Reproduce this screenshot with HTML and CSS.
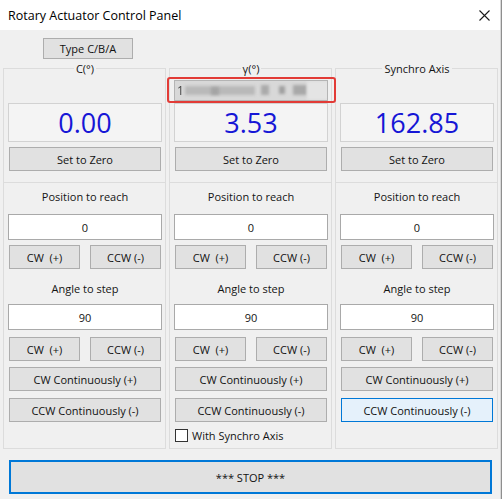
FILE: index.html
```html
<!DOCTYPE html>
<html>
<head>
<meta charset="utf-8">
<link rel="stylesheet" href="styles.css">
</head>
<body>
<div class="window">
  <div class="titlebar">
    <span class="title">Rotary Actuator Control Panel</span>
    <svg class="close" width="11" height="11" viewBox="0 0 11 11"><path d="M0.5 0.5 L10.5 10.5 M10.5 0.5 L0.5 10.5" stroke="#1a1a1a" stroke-width="1.1" fill="none"/></svg>
  </div>
  <div class="client">
    <div class="type-row"><div class="btn type-btn">Type C/B/A</div></div>
    <div class="columns">
      <div class="col">
        <div class="col-top">
          <div class="legend">C(°)</div>
          <div class="textrow"></div>
          <div class="display">0.00</div>
          <div class="btn zero">Set to Zero</div>
        </div>
        <div class="col-bottom">
          <div class="lbl first">Position to reach</div>
          <div class="input in1">0</div>
          <div class="pair p1"><div class="btn half">CW  (+)</div><div class="btn half">CCW (-)</div></div>
          <div class="lbl second">Angle to step</div>
          <div class="input in2">90</div>
          <div class="pair p2"><div class="btn half">CW  (+)</div><div class="btn half">CCW (-)</div></div>
          <div class="btn wide cwc">CW Continuously (+)</div>
          <div class="btn wide ccwc">CCW Continuously (-)</div>
        </div>
      </div>
      <div class="col mid">
        <div class="col-top">
          <div class="legend">γ(°)</div>
          <div class="textrow blurbox">
            <span class="cursor">1</span>
            <span class="blur b1"></span><span class="blur b2"></span><span class="blur b3"></span><span class="blur b4"></span><span class="blur b5"></span><span class="blur b6"></span>
          </div>
          <div class="display">3.53</div>
          <div class="btn zero">Set to Zero</div>
          <div class="highlight"></div>
        </div>
        <div class="col-bottom">
          <div class="lbl first">Position to reach</div>
          <div class="input in1">0</div>
          <div class="pair p1"><div class="btn half">CW  (+)</div><div class="btn half">CCW (-)</div></div>
          <div class="lbl second">Angle to step</div>
          <div class="input in2">90</div>
          <div class="pair p2"><div class="btn half">CW  (+)</div><div class="btn half">CCW (-)</div></div>
          <div class="btn wide cwc">CW Continuously (+)</div>
          <div class="btn wide ccwc">CCW Continuously (-)</div>
          <div class="check"><span class="box"></span><span>With Synchro Axis</span></div>
        </div>
      </div>
      <div class="col">
        <div class="col-top">
          <div class="legend">Synchro Axis</div>
          <div class="textrow"></div>
          <div class="display">162.85</div>
          <div class="btn zero">Set to Zero</div>
        </div>
        <div class="col-bottom">
          <div class="lbl first">Position to reach</div>
          <div class="input in1">0</div>
          <div class="pair p1"><div class="btn half">CW  (+)</div><div class="btn half">CCW (-)</div></div>
          <div class="lbl second">Angle to step</div>
          <div class="input in2">90</div>
          <div class="pair p2"><div class="btn half">CW  (+)</div><div class="btn half">CCW (-)</div></div>
          <div class="btn wide cwc">CW Continuously (+)</div>
          <div class="btn wide ccwc hover">CCW Continuously (-)</div>
        </div>
      </div>
    </div>
    <div class="btn stop">*** STOP ***</div>
  </div>
</div>
<div class="edge"></div>
</body>
</html>
```
FILE: styles.css
```css
* { box-sizing: border-box; }
html, body { margin: 0; padding: 0; }
body {
  width: 502px;
  height: 499px;
  overflow: hidden;
  display: flex;
  background: #f0f0f0;
  font-family: "Open Sans", "Noto Sans", sans-serif;
  font-size: 11px;
  color: #141414;
}
.window {
  width: 500px;
  height: 499px;
  display: flex;
  flex-direction: column;
  background: #f0f0f0;
}
.edge {
  width: 2px;
  height: 499px;
  border-left: 1px solid #d8d8d8;
  background: #8e8e8e;
}
.titlebar {
  height: 30px;
  flex: none;
  background: #ffffff;
  display: flex;
  align-items: center;
  justify-content: space-between;
  padding: 0 10px 0 8px;
}
.title {
  font-size: 12.5px;
  color: #000;
  letter-spacing: 0;
}
.close { display: block; margin-top: 1px; }
.client {
  display: flex;
  flex-direction: column;
}
.type-row {
  margin-top: 8px;
  padding-left: 43px;
}
.btn {
  display: flex;
  align-items: center;
  justify-content: center;
  background: #e1e1e1;
  border: 1px solid #adadad;
  white-space: pre;
  color: #111;
}
.type-btn {
  width: 90px;
  height: 21px;
}
.columns {
  display: flex;
  gap: 3px;
  margin-top: 9px;
  padding-left: 3px;
}
.col {
  width: 163px;
  border: 1px solid #dcdcdc;
  display: flex;
  flex-direction: column;
}
.mid .col-top { position: relative; }
.col-top {
  display: flex;
  flex-direction: column;
  padding: 0 3px 11px 4px;
  border-bottom: 1px solid #dcdcdc;
}
.legend {
  height: 14px;
  line-height: 14px;
  margin: -7px auto 0;
  padding: 0 2px;
  background: #f0f0f0;
  width: fit-content;
}
.textrow {
  margin-top: 4px;
  height: 21px;
}
.blurbox {
  position: relative;
  background: #d8d8d8;
  border: 1px solid #b4b4b4;
  overflow: hidden;
}
.cursor {
  position: absolute;
  left: 2px;
  top: 1px;
  line-height: 17px;
  font-size: 12px;
  color: #444;
  filter: blur(0.4px);
}
.blur {
  position: absolute;
  filter: blur(1.6px);
}
.b1 { left: 10px; top: 5px; width: 70px; height: 9px; background: #b9b9b9; }
.b2 { left: 36px; top: 6px; width: 8px; height: 8px; background: #a4a4a4; }
.b3 { left: 86px; top: 4px; width: 8px; height: 10px; background: #aaaaaa; }
.b4 { left: 104px; top: 5px; width: 6px; height: 8px; background: #a0a0a0; }
.b5 { left: 118px; top: 4px; width: 14px; height: 10px; background: #a8a8a8; }
.b6 { left: 132px; top: 0; width: 22px; height: 19px; background: #e4e4e4; }
.display {
  margin-top: 2px;
  height: 39px;
  background: #f4f4f4;
  border: 1px solid #d2d2d2;
  display: flex;
  align-items: center;
  justify-content: center;
  font-size: 27px;
  color: #1616d6;
}
.zero {
  margin: 5px 1px 0;
  height: 24px;
}
.highlight {
  position: absolute;
  left: -3px;
  top: 8px;
  width: 169px;
  height: 26px;
  border: 2px solid #e23b36;
  border-radius: 3px;
}
.col-bottom {
  display: flex;
  flex-direction: column;
  padding: 0 3px 6px 4px;
  flex: 1;
}
.lbl {
  height: 14px;
  line-height: 14px;
  text-align: center;
}
.lbl.first { margin-top: 7px; }
.lbl.second { margin-top: 13px; }
.input {
  height: 26px;
  background: #ffffff;
  border: 1px solid #a9a9a9;
  display: flex;
  align-items: center;
  justify-content: center;
}
.in1 { margin-top: 10px; }
.in2 { margin-top: 8px; }
.pair {
  display: flex;
  justify-content: space-between;
  padding: 0 1px;
}
.p1 { margin-top: 5px; }
.p2 { margin-top: 7px; }
.half {
  width: 71px;
  height: 24px;
}
.wide {
  height: 24px;
  margin: 0 1px;
}
.cwc { margin-top: 6px; }
.ccwc { margin-top: 7px; }
.hover {
  background: #e5f1fb;
  border-color: #0078d7;
}
.check {
  margin-top: 7px;
  height: 13px;
  display: flex;
  align-items: center;
  gap: 4px;
  padding-left: 1px;
  line-height: 13px;
}
.box {
  width: 13px;
  height: 13px;
  background: #fff;
  border: 1px solid #333;
}
.stop {
  margin: 11px 0 0 9px;
  width: 483px;
  height: 34px;
  border: 2px solid #0078d7;
}
```
